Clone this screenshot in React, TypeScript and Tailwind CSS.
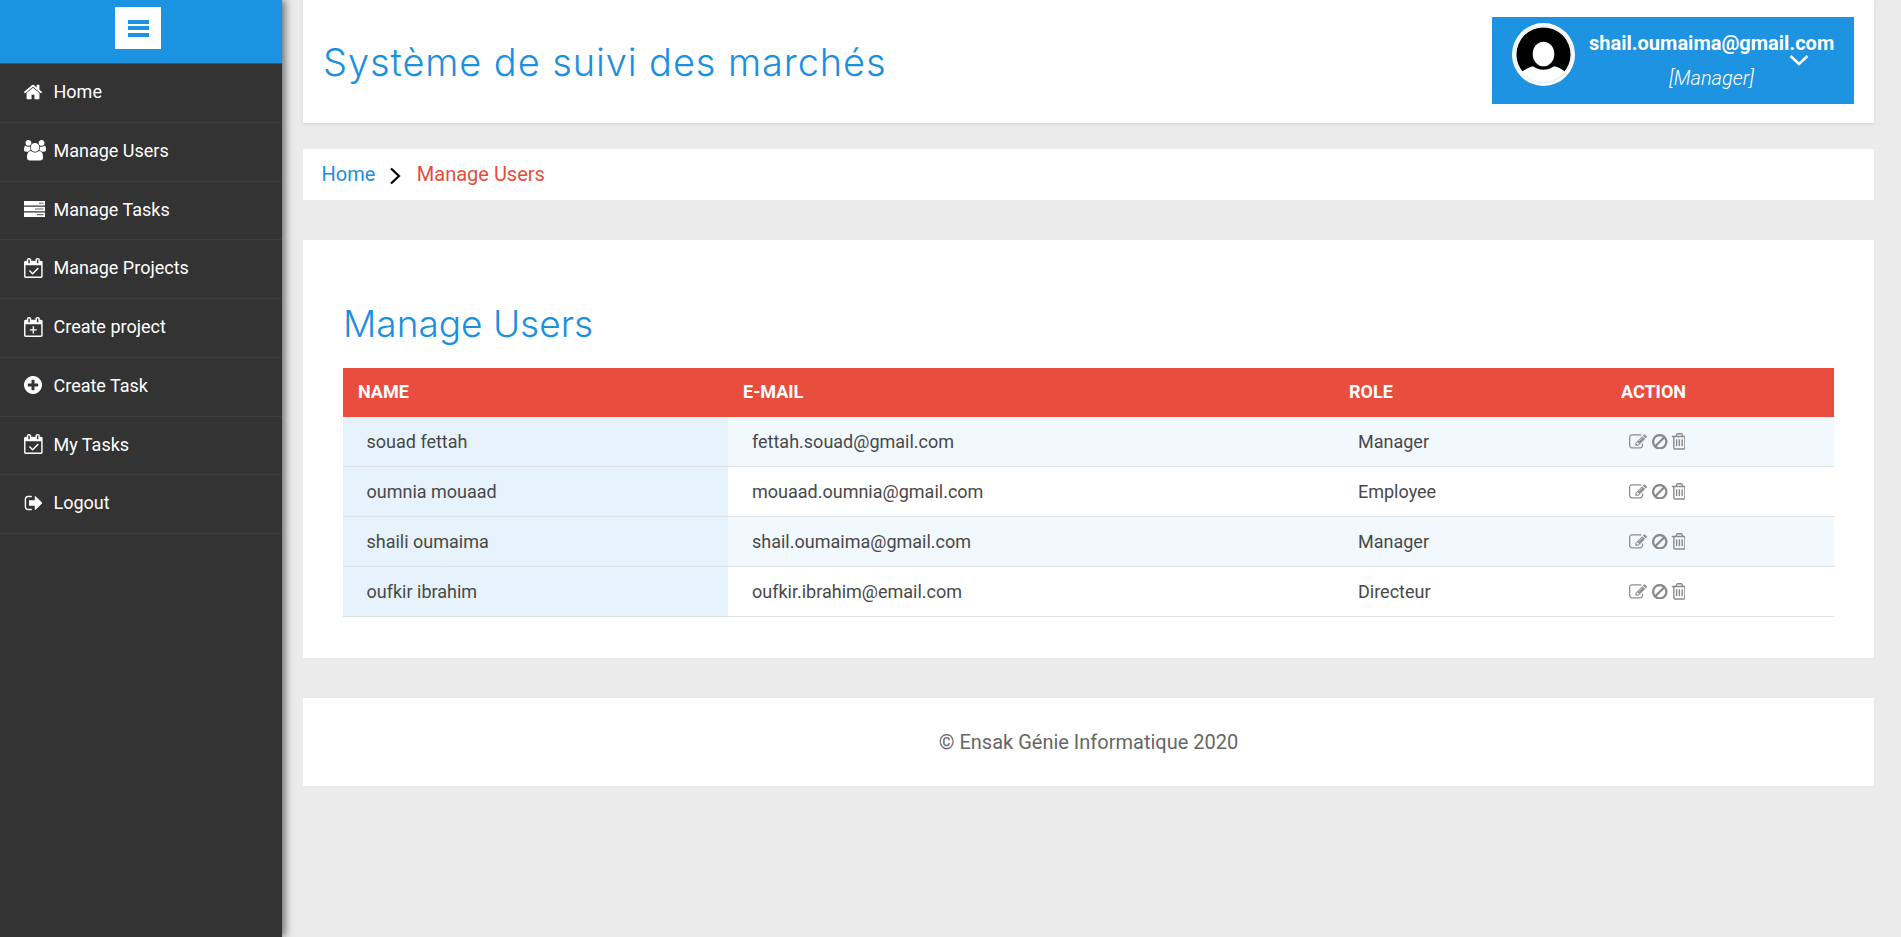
import React from "react";

const FRAME =
  "M128 1664h1408v-1024h-1408v1024zm384-1216v-288q0-14-9-23t-23-9h-64q-14 0-23 9t-9 23v288q0 14 9 23t23 9h64q14 0 23-9t9-23zm768 0v-288q0-14-9-23t-23-9h-64q-14 0-23 9t-9 23v288q0 14 9 23t23 9h64q14 0 23-9t9-23zm384-64v1280q0 52-38 90t-90 38h-1408q-52 0-90-38t-38-90v-1280q0-52 38-90t90-38h128v-96q0-66 47-113t113-47h64q66 0 113 47t47 113v96h384v-96q0-66 47-113t113-47h64q66 0 113 47t47 113v96h128q52 0 90 38t38 90z";
const CHECK =
  "M1303 964l-512 512q-10 9-23 9t-23-9l-288-288q-9-10-9-23t9-22l46-46q9-9 22-9t23 9l220 220 444-444q10-9 23-9t22 9l46 46q9 9 9 22t-9 23z";
const PLUS = "M768 832h128v256h256v128H896v256H768v-256H512v-128h256z";

type GlyphProps = { d: string; w: number; h: number; box: string; color?: string; evenodd?: boolean };
const Glyph = ({ d, w, h, box, color = "#fff", evenodd }: GlyphProps) => (
  <svg width={w} height={h} viewBox={box} className="block" preserveAspectRatio="xMidYMid meet">
    <path fill={color} fillRule={evenodd ? "evenodd" : "nonzero"} d={d} />
  </svg>
);

const HomeIcon = () => (
  <Glyph w={18} h={20} box="96 0 1600 1792" d="M1472 992v480q0 26-19 45t-45 19h-384v-384h-256v384h-384q-26 0-45-19t-19-45v-480q0-1 .5-3t.5-3l575-474 575 474q1 2 1 6zm223-69l-62 74q-8 9-21 11h-3q-13 0-21-7l-692-577-692 577q-12 8-24 7-13-2-21-11l-62-74q-8-10-7-23.500t11-21.500l719-599q32-26 76-26t76 26l244 204v-195q0-14 9-23t23-9h192q14 0 23 9t9 23v408l219 182q10 8 11 21.500t-7 23.500z" />
);
const UsersIcon = () => (
  <Glyph w={22} h={20.5} box="0 0 1920 1792" d="M593 896q-162 5-265 128h-134q-82 0-138-40.500t-56-118.500q0-353 124-353 6 0 43.500 21t97.500 42.500 119 21.500q67 0 133-23-5 37-5 66 0 139 81 256zm1071 637q0 120-73 189.500t-194 69.500h-874q-121 0-194-69.500t-73-189.500q0-53 3.500-103.500t14-109 26.500-108.500 43-97.500 62-81 85.500-53.500 111.500-20q10 0 43 21.500t73 48 107 48 135 21.500 135-21.500 107-48 73-48 43-21.500q61 0 111.500 20t85.500 53.500 62 81 43 97.500 26.500 108.500 14 109 3.500 103.500zm-1024-1277q0 106-75 181t-181 75-181-75-75-181 75-181 181-75 181 75 75 181zm704 384q0 159-112.500 271.500t-271.500 112.500-271.500-112.500-112.500-271.500 112.500-271.500 271.500-112.500 271.500 112.500 112.500 271.500zm576 225q0 78-56 118.500t-138 40.500h-134q-103-123-265-128 81-117 81-256 0-29-5-66 66 23 133 23 59 0 119-21.500t97.500-42.500 43.500-21q124 0 124 353zm-128-609q0 106-75 181t-181 75-181-75-75-181 75-181 181-75 181 75 75 181z" />
);
const ServerIcon = () => (
  <svg width="21" height="16" viewBox="0 0 21 16" className="block">
    <path fill="#fff" d="M0 0h21v4.600H0zM0 5.700h21v4.600H0zM0 11.400h21V16H0z" />
    <path fill="#666" d="M15 1.800h4.500v1H15zM11 7.400h8.500v1.200H11zM13 13.100h6.500v1.200H13z" />
  </svg>
);
const CalCheckIcon = () => <Glyph w={18.700} h={20} box="0 0 1664 1792" evenodd d={FRAME + CHECK} />;
const CalPlusIcon = () => <Glyph w={18.700} h={20} box="0 0 1664 1792" evenodd d={FRAME + PLUS} />;
const PlusCircleIcon = () => (
  <Glyph w={18} h={18} box="128 128 1536 1536" d="M1344 960v-128q0-26-19-45t-45-19h-256v-256q0-26-19-45t-45-19h-128q-26 0-45 19t-19 45v256h-256q-26 0-45 19t-19 45v128q0 26 19 45t45 19h256v256q0 26 19 45t45 19h128q26 0 45-19t19-45v-256h256q26 0 45-19t19-45zm320-64q0 209-103 385.500t-279.500 279.500-385.500 103-385.500-103-279.500-279.500-103-385.500 103-385.500 279.500-279.500 385.500-103 385.500 103 279.500 279.500 103 385.500z" />
);
const LogoutIcon = () => (
  <Glyph w={18.200} h={20} box="0 0 1632 1792" d="M704 1440q0 4 1 20t.5 26.500-3 23.500-10 19.500-20.500 6.500h-320q-119 0-203.500-84.500t-84.500-203.500v-704q0-119 84.500-203.500t203.500-84.500h320q13 0 22.500 9.500t9.500 22.500q0 4 1 20t.5 26.500-3 23.500-10 19.500-20.500 6.500h-320q-66 0-113 47t-47 113v704q0 66 47 113t113 47h288l11.500 1 11.500 3 8 5.500 7 9 2 13.500zm928-544q0 26-19 45l-544 544q-19 19-45 19t-45-19-19-45v-288h-448q-26 0-45-19t-19-45v-384q0-26 19-45t45-19h448v-288q0-26 19-45t45-19 45 19l544 544q19 19 19 45z" />
);
const EditIcon = () => (
  <Glyph w={18} h={18} box="0 0 1792 1792" color="#8e8e8e" d="M888 1184l116-116-152-152-116 116v56h96v96h56zm440-720q-16-16-33 1l-350 350q-17 17-1 33t33-1l350-350q17-17 1-33zm80 594v190q0 119-84.500 203.500t-203.500 84.500h-832q-119 0-203.500-84.500t-84.500-203.500v-832q0-119 84.500-203.500t203.500-84.500h832q63 0 117 25 15 7 18 23 3 17-9 29l-49 49q-14 14-32 8-23-6-45-6h-832q-66 0-113 47t-47 113v832q0 66 47 113t113 47h832q66 0 113-47t47-113v-126q0-13 9-22l64-64q15-15 35-7t20 29zm-96-738l288 288-672 672h-288v-288zm444 132l-92 92-288-288 92-92q28-28 68-28t68 28l152 152q28 28 28 68t-28 68z" />
);
const BanIcon = () => (
  <Glyph w={15.500} h={15.500} box="128 128 1536 1536" color="#8a8a8a" d="M1440 893q0-161-87-295l-754 753q137 89 297 89 111 0 211.500-43.500t173.500-116.500 116-174.500 43-212.500zm-999 299l755-754q-135-91-300-91-148 0-273 73t-198 199-73 274q0 162 89 299zm1223-299q0 157-61 300t-163.500 246-245 164-298.500 61-298.500-61-245-164-163.500-246-61-300 61-299.500 163.500-245.500 245-164 298.500-61 298.500 61 245 164 163.500 245.500 61 299.500z" />
);
const TrashIcon = () => (
  <Glyph w={14} h={16.700} box="128 128 1280 1536" color="#8a8a8a" d="M704 736v576q0 14-9 23t-23 9h-64q-14 0-23-9t-9-23v-576q0-14 9-23t23-9h64q14 0 23 9t9 23zm256 0v576q0 14-9 23t-23 9h-64q-14 0-23-9t-9-23v-576q0-14 9-23t23-9h64q14 0 23 9t9 23zm256 0v576q0 14-9 23t-23 9h-64q-14 0-23-9t-9-23v-576q0-14 9-23t23-9h64q14 0 23 9t9 23zm128 724v-948h-896v948q0 22 7 40.500t14.500 27 10.500 8.500h832q3 0 10.500-8.500t14.500-27 7-40.500zm-672-1076h448l-48-117q-7-9-17-11h-317q-10 2-17 11zm928 32v64q0 14-9 23t-23 9h-96v948q0 83-47 143.500t-113 60.500h-832q-66 0-113-58.500t-47-141.500v-952h-96q-14 0-23-9t-9-23v-64q0-14 9-23t23-9h309l70-167q15-37 54-63t79-26h320q40 0 79 26t54 63l70 167h309q14 0 23 9t9 23z" />
);
const Avatar = () => (
  <svg width="63" height="63" viewBox="0 0 64 64" className="block shrink-0">
    <defs>
      <clipPath id="avatar-clip">
        <circle cx="32" cy="32" r="28" />
      </clipPath>
    </defs>
    <circle cx="32" cy="32" r="32" fill="#fff" />
    <circle cx="32" cy="32" r="29" fill="none" stroke="#bfe0f6" strokeWidth="0.600" />
    <circle cx="32" cy="32" r="27.500" fill="#000" />
    <g clipPath="url(#avatar-clip)">
      <ellipse cx="32" cy="31.500" rx="11" ry="12.500" fill="#fff" />
      <path fill="#fff" d="M4 64V56C8 50 14 46 21 44c3 2 7 3.500 11 3.500s8-1.500 11-3.500c7 2 13 6 17 12v8z" />
    </g>
  </svg>
);

const nav: [React.ReactNode, string][] = [
  [<HomeIcon />, "Home"],
  [<UsersIcon />, "Manage Users"],
  [<ServerIcon />, "Manage Tasks"],
  [<CalCheckIcon />, "Manage Projects"],
  [<CalPlusIcon />, "Create project"],
  [<PlusCircleIcon />, "Create Task"],
  [<CalCheckIcon />, "My Tasks"],
  [<LogoutIcon />, "Logout"],
];

const users = [
  ["souad fettah", "fettah.souad@gmail.com", "Manager"],
  ["oumnia mouaad", "mouaad.oumnia@gmail.com", "Employee"],
  ["shaili oumaima", "shail.oumaima@gmail.com", "Manager"],
  ["oufkir ibrahim", "oufkir.ibrahim@email.com", "Directeur"],
];

export default function App() {
  return (
    <div className="flex h-[937px] overflow-hidden bg-[#ebebeb] font-['Roboto',sans-serif]">
      <aside className="z-10 w-[282px] shrink-0 bg-[#333333] shadow-[3px_0_8px_rgba(0,0,0,0.55)]">
        <div className="h-[64px] border-b border-[#2d5a7a] bg-[#1b93e1] pl-[115px] pt-[7px]">
          <button className="flex h-[42px] w-[46px] flex-col items-center justify-center gap-[2.500px] bg-white">
            <span className="h-[4px] w-[21px] bg-[#1b93e1]" />
            <span className="h-[4px] w-[21px] bg-[#1b93e1]" />
            <span className="h-[4px] w-[21px] bg-[#1b93e1]" />
          </button>
        </div>
        {nav.map(([icon, label]) => (
          <div key={label} className="flex h-[58.750px] items-center border-b border-[#3d3d3d] pb-[2.500px] pl-[24px] text-[18px] text-white">
            <span className="flex w-[29.500px] shrink-0 items-center">{icon}</span>
            <span>{label}</span>
          </div>
        ))}
      </aside>

      <main className="ml-[21px] flex w-[1571px] flex-col">
        <header className="flex h-[123px] items-center justify-between bg-white px-[20px] shadow-[0_1px_3px_rgba(0,0,0,0.1)]">
          <h1 className="mt-[2px] font-['Inter',sans-serif] text-[38px] font-light tracking-[0.9px] text-[#1b8fe0]">Système de suivi des marchés</h1>
          <div className="mb-[2px] flex h-[87px] w-[362px] items-start bg-[#1e93e2] pl-[20px] pt-[6px]">
            <Avatar />
            <div className="relative ml-[14px] flex-1 text-center text-white">
              <div className="mt-[8px] text-left text-[20px] font-bold leading-[24px]">shail.oumaima@gmail.com</div>
              <div className="mt-[11px] pr-[20px] text-[20px] font-light italic leading-[24px]">[Manager]</div>
              <svg width="20" height="12" viewBox="0 0 20 12" className="absolute left-[200px] top-[31px]">
                <path d="M1.500 2l8.500 8L18.500 2" fill="none" stroke="#fff" strokeWidth="2.500" />
              </svg>
            </div>
          </div>
        </header>

        <nav className="mt-[26px] flex h-[51px] items-center bg-white pb-[2px] pl-[18.500px] text-[20px]">
          <span className="text-[#1b8fe0]">Home</span>
          <svg width="12" height="18" viewBox="0 0 12 18" className="ml-[14px] mr-[15.500px] mt-[5px]">
            <path d="M2 1.500l8 7.500-8 7.500" fill="none" stroke="#000" strokeWidth="2.200" />
          </svg>
          <span className="text-[#e74c3c]">Manage Users</span>
        </nav>

        <section className="mt-[40px] h-[418px] bg-white px-[40px]">
          <h2 className="mt-[62px] font-['Inter',sans-serif] text-[37px] font-light leading-[44px] text-[#1b8fe0]">Manage Users</h2>
          <div className="mt-[22px] w-[1491px]">
            <div className="grid h-[49px] grid-cols-[385px_606px_272px_228px] items-center bg-[#e94d3d] pb-[2px] text-[18px] font-bold text-white">
              <div className="pl-[15px]">NAME</div>
              <div className="pl-[15px]">E-MAIL</div>
              <div className="pl-[15px]">ROLE</div>
              <div className="pl-[15px]">ACTION</div>
            </div>
            {users.map((u, i) => (
              <div key={u[0]} className={`grid h-[50px] grid-cols-[385px_606px_272px_228px] items-center border-b border-[#dee2e6] text-[18px] text-[#484848] ${i % 2 === 0 ? "bg-[#f1f8fe]" : "bg-white"}`}>
                <div className="flex h-full items-center bg-[#e6f3fc] pl-[23.500px]">{u[0]}</div>
                <div className="pl-[24px]">{u[1]}</div>
                <div className="pl-[24px]">{u[2]}</div>
                <div className="flex items-center pl-[23px]">
                  <EditIcon />
                  <span className="ml-[5px]"><BanIcon /></span>
                  <span className="ml-[3px]"><TrashIcon /></span>
                </div>
              </div>
            ))}
          </div>
        </section>

        <footer className="mt-[40px] flex h-[88px] items-center justify-center bg-white text-[20px] text-[#666666]">
          © Ensak Génie Informatique 2020
        </footer>
      </main>
    </div>
  );
}
